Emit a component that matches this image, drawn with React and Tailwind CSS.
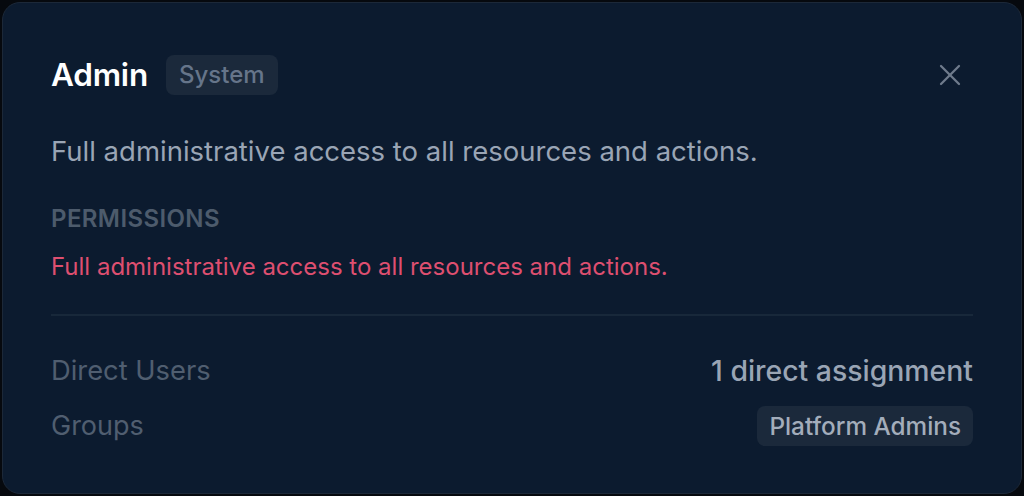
import { X } from "lucide-react";

function App() {
  return (
    <div
      className="w-[1024px] h-[496px] bg-[#06090e] p-[2px]"
      style={{ fontFamily: "Inter, 'Noto Sans', sans-serif" }}
    >
      <div className="h-full rounded-[18px] border border-[#1c2838] bg-[#0c1b2f] p-12 flex flex-col">
        <div className="h-12 flex items-center justify-between">
          <div className="flex items-center gap-[18px]">
            <h2 className="text-[31.5px] font-semibold text-white tracking-[-0.2px]">Admin</h2>
            <span className="h-10 px-[13px] rounded-[8px] bg-[#1b293b] text-[#66758a] text-[24px] font-medium flex items-center">
              System
            </span>
          </div>
          <button className="text-[#6f7b8c] mr-[5px]">
            <X size={36} strokeWidth={1.5} />
          </button>
        </div>

        <p className="mt-[33px] text-[27.5px] text-[#9aa5b5] leading-[40px]">
          Full administrative access to all resources and actions.
        </p>

        <div className="mt-[30px] text-[24px] font-semibold tracking-[0.4px] text-[#4d5b6c] leading-[36px]">
          PERMISSIONS
        </div>
        <div className="mt-[12px] text-[24px] text-[#de4f70] leading-[36px]">
          Full administrative access to all resources and actions.
        </div>

        <div className="mt-[29px] border-t-2 border-[#18283a]" />

        <div className="mt-[35px] flex items-center justify-between h-10">
          <span className="text-[27.3px] text-[#505e70]">Direct Users</span>
          <span className="text-[28.4px] font-medium text-[#9aa5b5]">1 direct assignment</span>
        </div>
        <div className="mt-[15px] flex items-center justify-between h-10">
          <span className="text-[27px] text-[#505e70]">Groups</span>
          <span className="h-10 px-3 rounded-[8px] bg-[#1b293b] text-[#a3adbb] text-[24.3px] font-medium flex items-center">
            Platform Admins
          </span>
        </div>
      </div>
    </div>
  );
}

export default App;
